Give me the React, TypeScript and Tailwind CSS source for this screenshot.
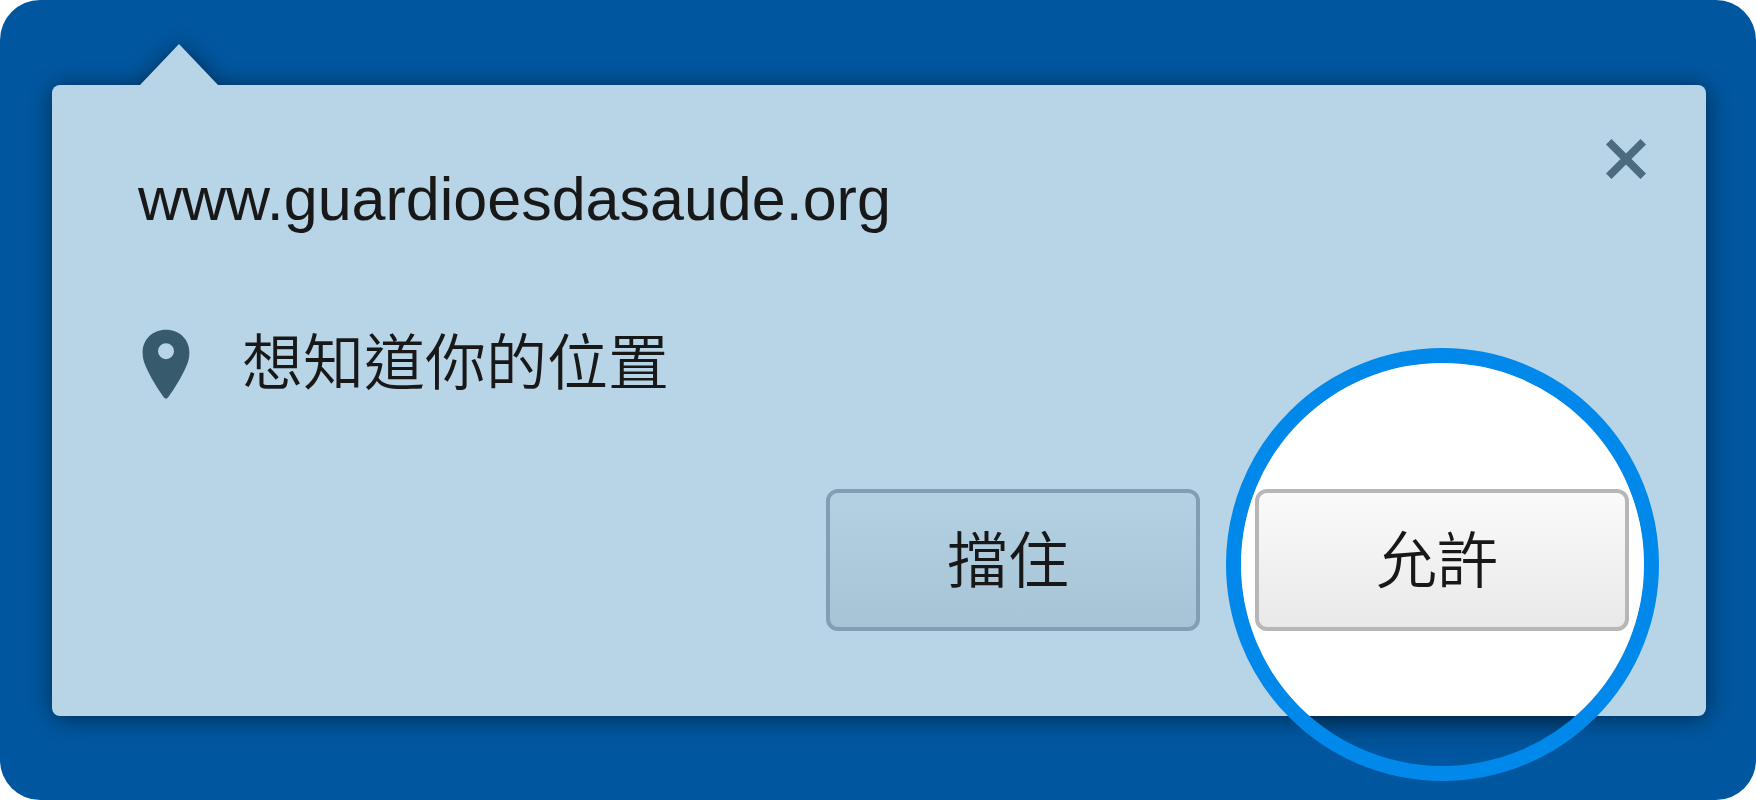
function PinIcon() {
  return (
    <svg className="h-[70px] w-12 shrink-0" viewBox="0 0 48 70" fill="#375a6d" fillRule="evenodd" aria-hidden="true">
      <path d="M24 0.700C10.500 0.700 0.600 10.500 0.600 23.500C0.600 28.500 1.600 32.500 3.600 37C8 47.500 15.500 59.500 21.800 68.300Q24 71 26.200 68.300C32.500 59.500 40 47.500 44.400 37C46.400 32.500 47.400 28.500 47.400 23.500C47.400 10.500 37.500 0.700 24 0.700ZM24 14.200A8 8 0 1 1 24 30.200A8 8 0 1 1 24 14.200Z" />
    </svg>
  );
}

function CloseIcon() {
  return (
    <svg className="size-10" viewBox="0 0 40 40" stroke="#4c6b7e" strokeWidth="7.800" aria-hidden="true">
      <path d="M2.700 2.700L37.300 37.300M37.300 2.700L2.700 37.300" />
    </svg>
  );
}

function BubbleBackdrop() {
  return (
    <div className="absolute inset-0 flex flex-col drop-shadow-[1px_2px_12px_rgba(0,0,0,0.5)]" aria-hidden="true">
      <svg className="ml-[88px] h-[41px] w-[78px] shrink-0" viewBox="0 0 78 41" fill="#b8d5e7">
        <path d="M39 0L78 41H0Z" />
      </svg>
      <div className="flex-1 rounded-lg bg-[#b8d5e7]" />
    </div>
  );
}

function Spotlight() {
  return (
    <div
      className="absolute -top-[141px] -left-[29px] size-[433px] overflow-hidden rounded-full border-[15px] border-[#0089eb]"
      aria-hidden="true"
    >
      <div className="h-[353px] bg-white shadow-[0_0_36px_rgba(0,0,0,0.5)]" />
    </div>
  );
}

const buttonBase =
  "relative h-[142px] w-[374px] rounded-xl border-4 pr-2.5 pb-1.5 text-center text-[61px] leading-[60px] font-[350]";

export default function App() {
  return (
    <main className="flex min-h-screen flex-col rounded-[40px] bg-[#0057a0] pt-11 pr-[50px] pb-[84px] pl-[52px] font-['Liberation_Sans','Noto_Sans_CJK_TC',sans-serif] text-[#181818]">
      <section className="relative pt-[41px]" role="dialog" aria-labelledby="site">
        <BubbleBackdrop />
        <div className="relative pt-[54px] pr-[60px] pb-[85px] pl-[86px]">
          <header className="flex items-start justify-between">
            <h1 id="site" className="pt-[26px] text-[61px] leading-[68px]">
              www.guardioesdasaude.org
            </h1>
            <button type="button" aria-label="關閉">
              <CloseIcon />
            </button>
          </header>
          <div className="mt-24 flex items-start gap-[52px] pl-1">
            <PinIcon />
            <p lang="zh-Hant" className="font-['Noto_Sans_CJK_TC',sans-serif] text-[61px] leading-[60px] font-[350]">
              想知道你的位置
            </p>
          </div>
          <div lang="zh-Hant" className="mt-[90px] flex justify-end gap-[55px] pr-[17px] font-['Noto_Sans_CJK_TC',sans-serif]">
            <button type="button" className={`${buttonBase} border-[#809fb3] bg-linear-to-b from-[#b4d1e4] to-[#a7c4d7]`}>
              擋住
            </button>
            <div className="relative">
              <Spotlight />
              <button type="button" className={`${buttonBase} border-[#b7b7b7] bg-linear-to-b from-[#fafafa] to-[#e9e9e9]`}>
                允許
              </button>
            </div>
          </div>
        </div>
      </section>
    </main>
  );
}
